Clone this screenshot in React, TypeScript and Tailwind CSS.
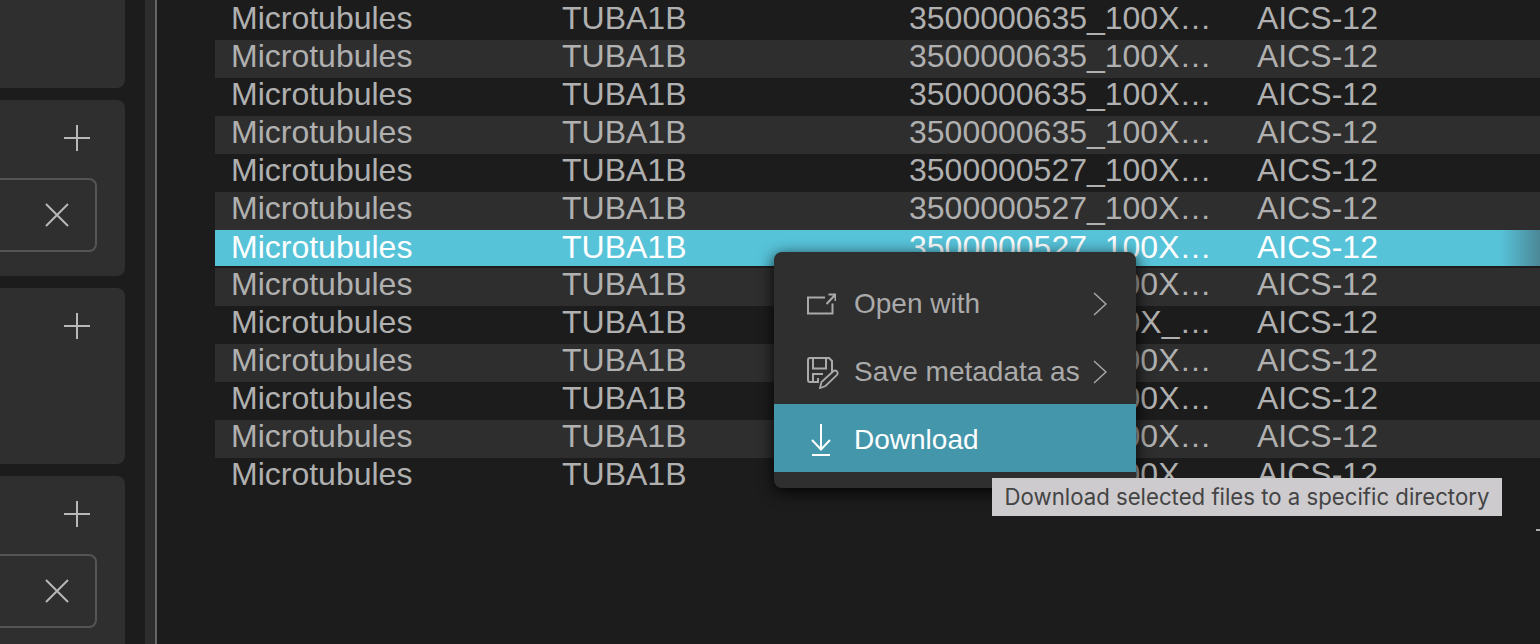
import React from 'react';

const sansFont = '[font-family:"Liberation_Sans",Arial,sans-serif]';

type Row = { file: string; selected?: boolean };

const rows: Row[] = [
  { file: '3500000635_100X…' },
  { file: '3500000635_100X…' },
  { file: '3500000635_100X…' },
  { file: '3500000635_100X…' },
  { file: '3500000527_100X…' },
  { file: '3500000527_100X…' },
  { file: '3500000527_100X…', selected: true },
  { file: '3500000527_100X…' },
  { file: '350000052_100X_…' },
  { file: '3500000527_100X…' },
  { file: '3500000527_100X…' },
  { file: '3500000527_100X…' },
  { file: '3500000527_100X…' },
];

function PlusIcon() {
  return (
    <svg width="26" height="26" viewBox="0 0 26 26" fill="none" stroke="#b8b8b8" strokeWidth="2">
      <path d="M13 0v26M0 13h26" />
    </svg>
  );
}

function CloseIcon() {
  return (
    <svg width="24" height="24" viewBox="0 0 24 24" fill="none" stroke="#b8b8b8" strokeWidth="2">
      <path d="M1 1l22 22M23 1L1 23" />
    </svg>
  );
}

function Chevron() {
  return (
    <svg className="mt-[4px]" width="14" height="24" viewBox="0 0 14 24" fill="none" stroke="#a8a8a8" strokeWidth="1.5">
      <path d="M1 1l12 11L1 23" />
    </svg>
  );
}

function OpenWithIcon() {
  return (
    <svg className="mt-[4px]" width="30" height="22" viewBox="0 0 30 22" fill="none" stroke="#aaaaaa" strokeWidth="2">
      <path d="M19 4.500H2v16h24.500V10.500" />
      <path d="M20.500 11L29 2M22.500 1.500h7V8" />
    </svg>
  );
}

function SaveMetaIcon() {
  return (
    <svg className="ml-[4px] mt-[6px]" width="32" height="32" viewBox="0 0 32 32" fill="none" stroke="#aaaaaa" strokeWidth="2">
      <path d="M12 25H3a2 2 0 0 1-2-2V3a2 2 0 0 1 2-2h19l3 3v11" />
      <path d="M6 1.500v10h13v-10M6 25v-8h10M11 25v-4" />
      <path d="M13 31l1.500-6L26 14.500a2.200 2.200 0 0 1 4 3.500L18.500 29z" strokeWidth="1.800" />
    </svg>
  );
}

function DownloadIcon() {
  return (
    <svg className="mt-[4px]" width="20" height="32" viewBox="0 0 20 32" fill="none" stroke="#ffffff" strokeWidth="2">
      <path d="M10 0v25M1 16l9 9.500 9-9.500" />
      <path d="M1 31h18" />
    </svg>
  );
}

function SideCard({ box }: { box: boolean }) {
  return (
    <div className="h-[176px] w-[125px] shrink-0 rounded-r-lg bg-[#2f2f2f] pt-[25px]">
      <div className="flex justify-end pr-[35px]">
        <PlusIcon />
      </div>
      {box && (
        <div className="mt-[27px] flex h-[74px] w-[97px] items-center justify-end rounded-r-lg border-2 border-l-0 border-[#555555] pr-[26px]">
          <CloseIcon />
        </div>
      )}
    </div>
  );
}

function MenuItem({ label, icon, arrow, active }: { label: string; icon: React.ReactNode; arrow?: boolean; active?: boolean }) {
  return (
    <div className={`flex h-[68px] items-center ${active ? 'bg-[#4496ab] text-white' : 'text-[#aaaaaa]'}`}>
      <div className="flex w-[80px] shrink-0 justify-center pl-[14px]">{icon}</div>
      <span className="flex-1 pt-[3px] text-[28px]">{label}</span>
      {arrow && (
        <div className="pr-[29px]">
          <Chevron />
        </div>
      )}
    </div>
  );
}

export default function App() {
  return (
    <div className={`relative flex h-[644px] w-[1540px] overflow-hidden bg-[#1c1c1c] ${sansFont}`}>
      {/* Filter sidebar */}
      <div className="-mt-[88px] flex w-[145px] shrink-0 flex-col gap-3">
        <SideCard box={false} />
        <SideCard box />
        <SideCard box={false} />
        <SideCard box />
      </div>

      {/* Resize handle */}
      <div className="h-full w-[12px] shrink-0 border-r-2 border-[#666666] bg-[#2d2d2d]" />

      {/* File list */}
      <div className="min-w-0 flex-1 pl-[58px] pt-[2px]">
        {rows.map((row, i) => (
          <div
            key={i}
            className={`flex items-center pl-[16px] text-[32px] leading-[32px] ${
              row.selected
                ? 'mb-[2px] h-[36px] bg-gradient-to-r from-[#57c3d9] from-[97%] to-[#4a8796] pb-[2px] text-white'
                : `h-[38px] pb-[6px] text-[#b0b0b0] ${i % 2 === 1 ? 'bg-[#2e2e2e]' : ''}`
            }`}
          >
            <div className="w-[331px] shrink-0">Microtubules</div>
            <div className="w-[347px] shrink-0">TUBA1B</div>
            <div className="w-[348px] shrink-0 whitespace-nowrap">{row.file}</div>
            <div>AICS-12</div>
          </div>
        ))}
      </div>

      {/* Context menu */}
      <div className="absolute left-[774px] top-[252px] w-[362px] overflow-hidden rounded-lg bg-[#2f2f2f] py-4 shadow-[0_4px_16px_rgba(0,0,0,0.9)]">
        <MenuItem label="Open with" icon={<OpenWithIcon />} arrow />
        <MenuItem label="Save metadata as" icon={<SaveMetaIcon />} arrow />
        <MenuItem label="Download" icon={<DownloadIcon />} active />
      </div>

      {/* Tooltip */}
      <div className="absolute left-[992px] top-[478px] flex h-[38px] w-[510px] items-center justify-center whitespace-nowrap bg-[#cdcbce] text-[22.2px] text-[#444444] [font-family:Inter,sans-serif]">
        Download selected files to a specific directory
      </div>

      {/* Clipped marker at the right edge */}
      <div className="absolute right-0 top-[529px] h-[2px] w-[4px] bg-[#aaaaaa]" />
    </div>
  );
}
